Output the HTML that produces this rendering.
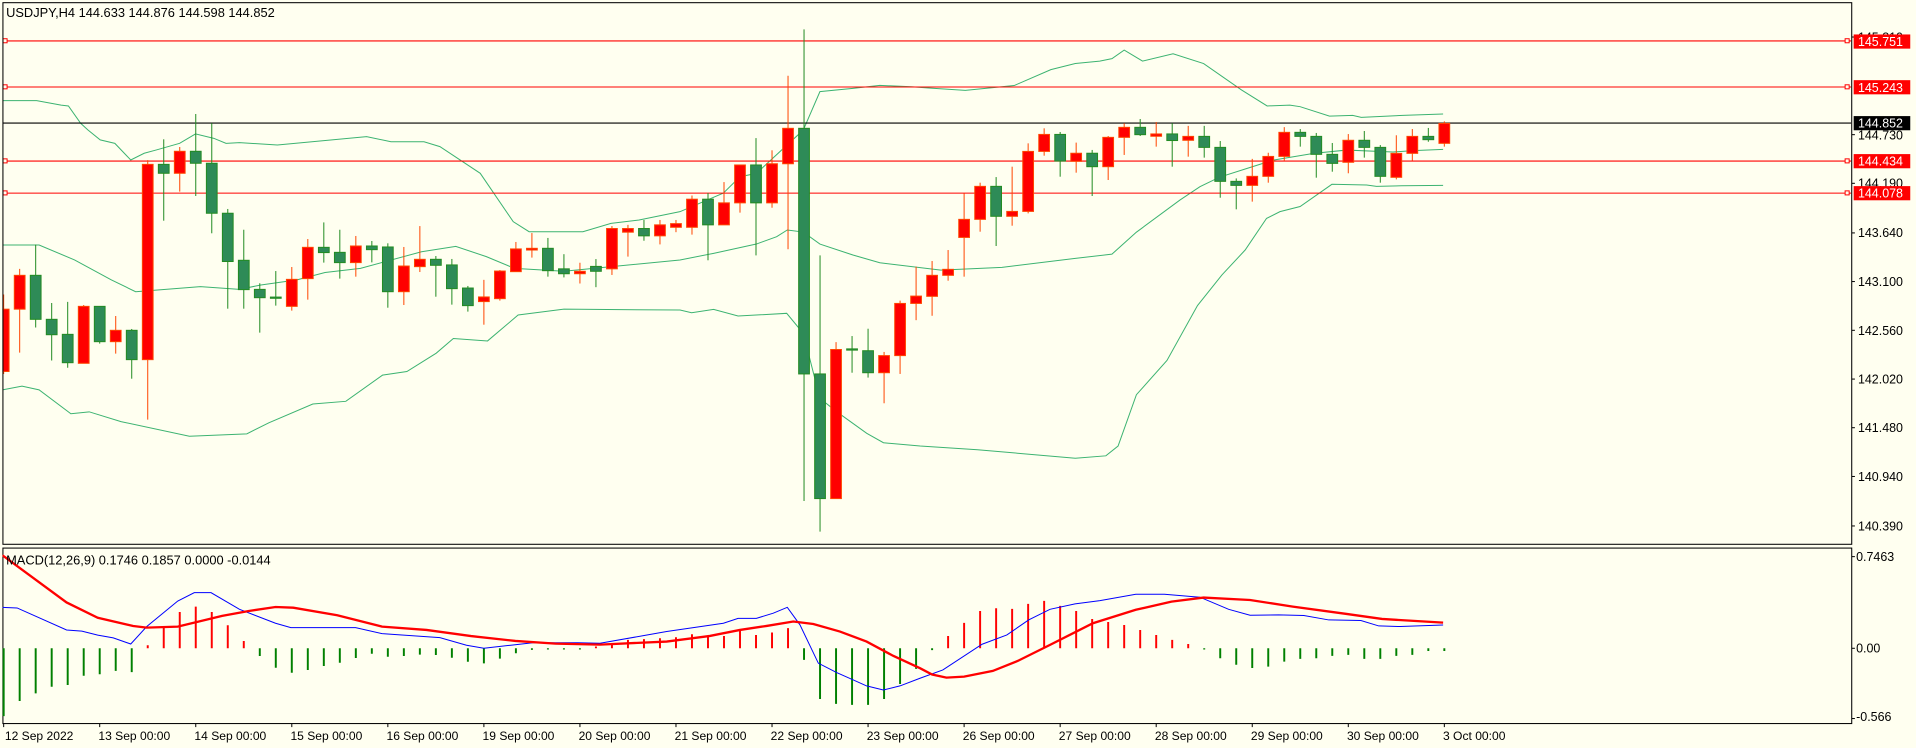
<!DOCTYPE html>
<html><head><meta charset="utf-8"><style>
html,body{margin:0;padding:0;background:#FFFFF0;}
svg{display:block;}
text{font-family:"Liberation Sans","DejaVu Sans",sans-serif;font-size:10.2px;fill:#000;}
.big{font-size:10.5px}
.tm{font-size:9.9px}
.g line{stroke:#228B22;stroke-width:0.82}
.g rect{fill:#2E8B57;stroke:#228B22;stroke-width:0.82}
.r line{stroke:#FF4500;stroke-width:0.82}
.r rect{fill:#FF0000;stroke:#FF4500;stroke-width:0.82}
.bb{fill:none;stroke:#3CB371;stroke-width:0.82}
.hr{stroke:#FF0000;stroke-width:0.82}
.hg line{stroke:#008000;stroke-width:1.6}
.hrd line{stroke:#FF0000;stroke-width:1.6}
.wt{fill:#fff}
</style></head><body>
<svg width="1916" height="748" viewBox="0 0 1568 612.1" preserveAspectRatio="none" xmlns="http://www.w3.org/2000/svg">
<rect x="0" y="0" width="1568" height="612.1" fill="#FFFFF0"/>
<defs><clipPath id="cm"><rect x="2" y="2" width="1513" height="443"/></clipPath>
<clipPath id="cd"><rect x="2" y="448.5" width="1513" height="143.5"/></clipPath></defs>

<g clip-path="url(#cm)">
<polyline class="bb" points="2,82.3 30,82.3 50,86 56,86.7 66,100.9 72,106.4 82,114.5 94,117.3 107,130.9 118,125.4 128,122.7 147,117.3 160,109.6 175,113.2 185,117.3 196,116.7 227,118.7 300,111.8 320,116 347,116 360,120 393,141.8 420,181.4 433,189.6 477,189.6 500,182.8 523,180 556.5,173.2 592,158 605.6,144.6 619,141.9 657.4,106.4 671,75 698,72.3 720,69.9 746,71 760,72 790,74 830,70 860,57 880,52 900,50 910,48 920,41 935,50 960,44 985,52 1016,73.6 1037,86.7 1055.6,86 1064,87.3 1088,95 1107,94.4 1114,96 1148,94.4 1181,93.3"/>
<polyline class="bb" points="2,200.5 32,200.5 61,212.7 91,229 111,238.7 129,237.3 164,234.6 196,236.8 213.5,233.2 243,229 266,223 295,219.6 345,206 373,201.6 398,210 421,219.6 461.5,222 556.5,212.8 584,207.3 619,199.7 635.6,193.7 644.3,188.2 657.4,189.9 671,199.7 698,208.7 720,215 770,221 820,218.8 880,211.4 910,208 930,190 965.6,163.7 982,152.8 998,145 1020,138 1042,131 1075,125.5 1102,122.8 1140,124.4 1156.6,123.3 1181,122.2"/>
<polyline class="bb" points="2,319 18,316 32,319 58,338.6 73,337 99,345 155,357 202,355 220,346 256,330.6 283,328.4 313,307 333,304 357,289 371,277 399,279 424,257.8 461.5,253 556.5,253.7 566,255.9 584,253.2 604,258.6 643.8,256.4 657.4,272.8 671,326 684.7,336.9 709.3,354.6 723,362.3 753,365 800,368 880,375 905,373 915,365 930,323 955,295 980,250 1000,225 1019,204.6 1036.5,178.7 1047.5,173.2 1064,169 1090,150.8 1118.4,151.4 1126.5,152.5 1147,152 1181,151.7"/>

<line class="hr" x1="2" y1="33.5" x2="1515" y2="33.5"/>
<line class="hr" x1="2" y1="71.2" x2="1515" y2="71.2"/>
<line class="hr" x1="2" y1="131.8" x2="1515" y2="131.8"/>
<line class="hr" x1="2" y1="158" x2="1515" y2="158"/>
<line x1="2" y1="100.7" x2="1515" y2="100.7" stroke="#000" stroke-width="0.9"/>
<g fill="#FFFFF0" stroke="#FF0000" stroke-width="0.82">
<rect x="2.5" y="31.7" width="3.3" height="3.3"/><rect x="2.5" y="69.4" width="3.3" height="3.3"/><rect x="2.5" y="130" width="3.3" height="3.3"/><rect x="2.5" y="156.2" width="3.3" height="3.3"/>
<rect x="1510" y="31.7" width="3.3" height="3.3"/><rect x="1510" y="69.4" width="3.3" height="3.3"/><rect x="1510" y="130" width="3.3" height="3.3"/><rect x="1510" y="156.2" width="3.3" height="3.3"/>
</g>

<g class="r"><line x1="3" y1="241" x2="3" y2="306"/><rect x="-1.4" y="253" width="8.8" height="51"/></g>
<g class="r"><line x1="16.1" y1="220" x2="16.1" y2="288.6"/><rect x="11.7" y="225.3" width="8.8" height="27.7"/></g>
<g class="g"><line x1="29.2" y1="200.2" x2="29.2" y2="268"/><rect x="24.8" y="225.3" width="8.8" height="36"/></g>
<g class="g"><line x1="42.3" y1="248" x2="42.3" y2="295"/><rect x="37.9" y="261.3" width="8.8" height="12.6"/></g>
<g class="g"><line x1="55.4" y1="247" x2="55.4" y2="300.9"/><rect x="51" y="273.6" width="8.8" height="23.2"/></g>
<g class="r"><line x1="68.5" y1="249.6" x2="68.5" y2="297.3"/><rect x="64.1" y="250.7" width="8.8" height="46.6"/></g>
<g class="g"><line x1="81.6" y1="250.7" x2="81.6" y2="281.2"/><rect x="77.2" y="250.7" width="8.8" height="28.9"/></g>
<g class="r"><line x1="94.7" y1="258.6" x2="94.7" y2="289.4"/><rect x="90.3" y="270.3" width="8.8" height="9.3"/></g>
<g class="g"><line x1="107.8" y1="269.2" x2="107.8" y2="309.9"/><rect x="103.4" y="270.3" width="8.8" height="24"/></g>
<g class="r"><line x1="120.9" y1="131" x2="120.9" y2="343.4"/><rect x="116.5" y="134.5" width="8.8" height="159.8"/></g>
<g class="g"><line x1="134" y1="114" x2="134" y2="180.6"/><rect x="129.6" y="134.5" width="8.8" height="7.3"/></g>
<g class="r"><line x1="147.1" y1="120.3" x2="147.1" y2="156.8"/><rect x="142.7" y="123.8" width="8.8" height="18"/></g>
<g class="g"><line x1="160.2" y1="93.3" x2="160.2" y2="160.4"/><rect x="155.8" y="123.8" width="8.8" height="9.8"/></g>
<g class="g"><line x1="173.3" y1="100.9" x2="173.3" y2="190.9"/><rect x="168.9" y="133.6" width="8.8" height="40.9"/></g>
<g class="g"><line x1="186.4" y1="171" x2="186.4" y2="252.6"/><rect x="182" y="174.5" width="8.8" height="39.5"/></g>
<g class="g"><line x1="199.5" y1="188" x2="199.5" y2="252.6"/><rect x="195.1" y="213" width="8.8" height="24"/></g>
<g class="g"><line x1="212.6" y1="231.8" x2="212.6" y2="272.2"/><rect x="208.2" y="236.8" width="8.8" height="6.8"/></g>
<g class="g"><line x1="225.7" y1="221.8" x2="225.7" y2="250.1"/><rect x="221.3" y="243.1" width="8.8" height="1"/></g>
<g class="r"><line x1="238.8" y1="218.5" x2="238.8" y2="254.2"/><rect x="234.4" y="228.6" width="8.8" height="22.1"/></g>
<g class="r"><line x1="251.9" y1="195.6" x2="251.9" y2="245.2"/><rect x="247.5" y="202.4" width="8.8" height="25.6"/></g>
<g class="g"><line x1="265" y1="182" x2="265" y2="214.9"/><rect x="260.6" y="202.4" width="8.8" height="4.3"/></g>
<g class="g"><line x1="278.1" y1="188" x2="278.1" y2="228"/><rect x="273.7" y="206.5" width="8.8" height="8.4"/></g>
<g class="r"><line x1="291.2" y1="193.1" x2="291.2" y2="226.4"/><rect x="286.8" y="201.3" width="8.8" height="13.6"/></g>
<g class="g"><line x1="304.3" y1="197.2" x2="304.3" y2="214.7"/><rect x="299.9" y="201.3" width="8.8" height="3"/></g>
<g class="g"><line x1="317.4" y1="199.1" x2="317.4" y2="251.8"/><rect x="313" y="202.1" width="8.8" height="36.6"/></g>
<g class="r"><line x1="330.5" y1="202.1" x2="330.5" y2="249.6"/><rect x="326.1" y="217.7" width="8.8" height="21"/></g>
<g class="r"><line x1="343.6" y1="185" x2="343.6" y2="222.6"/><rect x="339.2" y="212.2" width="8.8" height="6"/></g>
<g class="g"><line x1="356.7" y1="209.5" x2="356.7" y2="242.8"/><rect x="352.3" y="212.2" width="8.8" height="4.9"/></g>
<g class="g"><line x1="369.8" y1="211.9" x2="369.8" y2="249.3"/><rect x="365.4" y="216.8" width="8.8" height="19.4"/></g>
<g class="g"><line x1="382.9" y1="234" x2="382.9" y2="255"/><rect x="378.5" y="235.7" width="8.8" height="14.4"/></g>
<g class="r"><line x1="396" y1="229" x2="396" y2="265.7"/><rect x="391.6" y="243" width="8.8" height="3.8"/></g>
<g class="r"><line x1="409.1" y1="221" x2="409.1" y2="246"/><rect x="404.7" y="221.8" width="8.8" height="22.6"/></g>
<g class="r"><line x1="422.2" y1="198" x2="422.2" y2="222.3"/><rect x="417.8" y="203.7" width="8.8" height="18.6"/></g>
<g class="r"><line x1="435.3" y1="190.7" x2="435.3" y2="210.8"/><rect x="430.9" y="203.2" width="8.8" height="1.4"/></g>
<g class="g"><line x1="448.4" y1="194.7" x2="448.4" y2="226.4"/><rect x="444" y="203.2" width="8.8" height="18.3"/></g>
<g class="g"><line x1="461.5" y1="208" x2="461.5" y2="227"/><rect x="457.1" y="220" width="8.8" height="4"/></g>
<g class="r"><line x1="474.6" y1="215" x2="474.6" y2="232"/><rect x="470.2" y="222" width="8.8" height="2"/></g>
<g class="g"><line x1="487.7" y1="212" x2="487.7" y2="235"/><rect x="483.3" y="218" width="8.8" height="4"/></g>
<g class="r"><line x1="500.8" y1="185" x2="500.8" y2="225"/><rect x="496.4" y="187" width="8.8" height="33"/></g>
<g class="r"><line x1="513.9" y1="184" x2="513.9" y2="210"/><rect x="509.5" y="187" width="8.8" height="3"/></g>
<g class="g"><line x1="527" y1="180" x2="527" y2="197"/><rect x="522.6" y="187" width="8.8" height="6"/></g>
<g class="r"><line x1="540.1" y1="180" x2="540.1" y2="200"/><rect x="535.7" y="184" width="8.8" height="9"/></g>
<g class="r"><line x1="553.2" y1="180" x2="553.2" y2="190"/><rect x="548.8" y="183" width="8.8" height="3"/></g>
<g class="r"><line x1="566.3" y1="160" x2="566.3" y2="192"/><rect x="561.9" y="163" width="8.8" height="23"/></g>
<g class="g"><line x1="579.4" y1="158" x2="579.4" y2="213"/><rect x="575" y="163" width="8.8" height="21"/></g>
<g class="r"><line x1="592.5" y1="149" x2="592.5" y2="184"/><rect x="588.1" y="166" width="8.8" height="18"/></g>
<g class="r"><line x1="605.6" y1="135" x2="605.6" y2="174"/><rect x="601.2" y="135" width="8.8" height="31"/></g>
<g class="g"><line x1="618.7" y1="113" x2="618.7" y2="209"/><rect x="614.3" y="135" width="8.8" height="31"/></g>
<g class="r"><line x1="631.8" y1="123" x2="631.8" y2="170"/><rect x="627.4" y="134" width="8.8" height="32"/></g>
<g class="r"><line x1="644.9" y1="62" x2="644.9" y2="204"/><rect x="640.5" y="105" width="8.8" height="29"/></g>
<g class="g"><line x1="658" y1="24" x2="658" y2="410"/><rect x="653.6" y="105" width="8.8" height="201"/></g>
<g class="g"><line x1="671.1" y1="209" x2="671.1" y2="435"/><rect x="666.7" y="306" width="8.8" height="102"/></g>
<g class="r"><line x1="684.2" y1="280" x2="684.2" y2="408"/><rect x="679.8" y="286" width="8.8" height="122"/></g>
<g class="g"><line x1="697.3" y1="275" x2="697.3" y2="305"/><rect x="692.9" y="285.5" width="8.8" height="1"/></g>
<g class="g"><line x1="710.4" y1="269" x2="710.4" y2="309"/><rect x="706" y="287" width="8.8" height="18"/></g>
<g class="r"><line x1="723.5" y1="288" x2="723.5" y2="330"/><rect x="719.1" y="291" width="8.8" height="14"/></g>
<g class="r"><line x1="736.6" y1="246" x2="736.6" y2="306"/><rect x="732.2" y="248.3" width="8.8" height="42.7"/></g>
<g class="r"><line x1="749.7" y1="218.2" x2="749.7" y2="262"/><rect x="745.3" y="242.3" width="8.8" height="6"/></g>
<g class="r"><line x1="762.8" y1="213.6" x2="762.8" y2="258.4"/><rect x="758.4" y="225.3" width="8.8" height="17.2"/></g>
<g class="r"><line x1="775.9" y1="204.6" x2="775.9" y2="229.7"/><rect x="771.5" y="220.4" width="8.8" height="4.9"/></g>
<g class="r"><line x1="789" y1="158.2" x2="789" y2="226.4"/><rect x="784.6" y="179.5" width="8.8" height="14.8"/></g>
<g class="r"><line x1="802.1" y1="149.5" x2="802.1" y2="189.6"/><rect x="797.7" y="152.5" width="8.8" height="27"/></g>
<g class="g"><line x1="815.2" y1="144.9" x2="815.2" y2="201.3"/><rect x="810.8" y="152.5" width="8.8" height="24.5"/></g>
<g class="r"><line x1="828.3" y1="136.4" x2="828.3" y2="184.7"/><rect x="823.9" y="173" width="8.8" height="4"/></g>
<g class="r"><line x1="841.4" y1="117.3" x2="841.4" y2="174.6"/><rect x="837" y="123.9" width="8.8" height="49.1"/></g>
<g class="r"><line x1="854.5" y1="105" x2="854.5" y2="127.4"/><rect x="850.1" y="110" width="8.8" height="13.9"/></g>
<g class="g"><line x1="867.6" y1="108" x2="867.6" y2="144.6"/><rect x="863.2" y="110" width="8.8" height="21.8"/></g>
<g class="r"><line x1="880.7" y1="116.7" x2="880.7" y2="141.3"/><rect x="876.3" y="125.4" width="8.8" height="6.6"/></g>
<g class="g"><line x1="893.8" y1="122.7" x2="893.8" y2="160.4"/><rect x="889.4" y="125.4" width="8.8" height="11"/></g>
<g class="r"><line x1="906.9" y1="111.3" x2="906.9" y2="147.3"/><rect x="902.5" y="112.4" width="8.8" height="24"/></g>
<g class="r"><line x1="920" y1="100.9" x2="920" y2="126.8"/><rect x="915.6" y="104.2" width="8.8" height="8.2"/></g>
<g class="g"><line x1="933.1" y1="97.4" x2="933.1" y2="111.3"/><rect x="928.7" y="104.2" width="8.8" height="6"/></g>
<g class="r"><line x1="946.2" y1="99.8" x2="946.2" y2="120"/><rect x="941.8" y="109.6" width="8.8" height="1.9"/></g>
<g class="g"><line x1="959.3" y1="100.9" x2="959.3" y2="136.4"/><rect x="954.9" y="109.6" width="8.8" height="5.4"/></g>
<g class="r"><line x1="972.4" y1="103" x2="972.4" y2="128.2"/><rect x="968" y="111.6" width="8.8" height="3.2"/></g>
<g class="g"><line x1="985.5" y1="103" x2="985.5" y2="129"/><rect x="981.1" y="111.6" width="8.8" height="9"/></g>
<g class="g"><line x1="998.6" y1="115.4" x2="998.6" y2="161.8"/><rect x="994.2" y="120.6" width="8.8" height="27.8"/></g>
<g class="g"><line x1="1011.7" y1="146" x2="1011.7" y2="171.3"/><rect x="1007.3" y="148.4" width="8.8" height="3.3"/></g>
<g class="r"><line x1="1024.8" y1="130" x2="1024.8" y2="165"/><rect x="1020.4" y="144.3" width="8.8" height="7.4"/></g>
<g class="r"><line x1="1037.9" y1="125" x2="1037.9" y2="149.5"/><rect x="1033.5" y="128" width="8.8" height="16.3"/></g>
<g class="r"><line x1="1051" y1="104" x2="1051" y2="131.7"/><rect x="1046.6" y="108.3" width="8.8" height="19.7"/></g>
<g class="g"><line x1="1064.1" y1="105.6" x2="1064.1" y2="120"/><rect x="1059.7" y="108.3" width="8.8" height="3.3"/></g>
<g class="g"><line x1="1077.2" y1="108.8" x2="1077.2" y2="145.4"/><rect x="1072.8" y="111.6" width="8.8" height="14.7"/></g>
<g class="g"><line x1="1090.3" y1="117" x2="1090.3" y2="140.5"/><rect x="1085.9" y="126.3" width="8.8" height="7.4"/></g>
<g class="r"><line x1="1103.4" y1="109.7" x2="1103.4" y2="141.8"/><rect x="1099" y="114.8" width="8.8" height="18"/></g>
<g class="g"><line x1="1116.5" y1="107.2" x2="1116.5" y2="129"/><rect x="1112.1" y="114.8" width="8.8" height="5.8"/></g>
<g class="g"><line x1="1129.6" y1="118.7" x2="1129.6" y2="149.5"/><rect x="1125.2" y="120.6" width="8.8" height="23.7"/></g>
<g class="r"><line x1="1142.7" y1="110.7" x2="1142.7" y2="146.8"/><rect x="1138.3" y="125.5" width="8.8" height="19.6"/></g>
<g class="r"><line x1="1155.8" y1="105.6" x2="1155.8" y2="131.5"/><rect x="1151.4" y="111.6" width="8.8" height="13.9"/></g>
<g class="g"><line x1="1168.9" y1="104.7" x2="1168.9" y2="116"/><rect x="1164.5" y="111.6" width="8.8" height="2.7"/></g>
<g class="r"><line x1="1182" y1="99.3" x2="1182" y2="120"/><rect x="1177.6" y="101" width="8.8" height="16.3"/></g>
</g>

<rect x="2.4" y="2.2" width="1513" height="443.2" fill="none" stroke="#000" stroke-width="0.85"/>
<rect x="2.4" y="448.5" width="1513" height="143.6" fill="none" stroke="#000" stroke-width="0.85"/>

<text class="big" x="5" y="13.8">USDJPY,H4  144.633 144.876 144.598 144.852</text>

<g stroke="#000" stroke-width="0.82">
<line x1="1515.5" y1="30.3" x2="1518" y2="30.3"/><line x1="1515.5" y1="110.2" x2="1518" y2="110.2"/><line x1="1515.5" y1="150" x2="1518" y2="150"/><line x1="1515.5" y1="190.6" x2="1518" y2="190.6"/><line x1="1515.5" y1="230.4" x2="1518" y2="230.4"/><line x1="1515.5" y1="270.3" x2="1518" y2="270.3"/><line x1="1515.5" y1="310.2" x2="1518" y2="310.2"/><line x1="1515.5" y1="350" x2="1518" y2="350"/><line x1="1515.5" y1="389.9" x2="1518" y2="389.9"/><line x1="1515.5" y1="430.4" x2="1518" y2="430.4"/>
<line x1="1515.5" y1="455.5" x2="1518" y2="455.5"/><line x1="1515.5" y1="530.5" x2="1518" y2="530.5"/><line x1="1515.5" y1="588" x2="1518" y2="588"/>
</g>
<text x="1520.5" y="34">145.810</text>
<text x="1520.5" y="114">144.730</text>
<text x="1520.5" y="153.5">144.190</text>
<text x="1520.5" y="194">143.640</text>
<text x="1520.5" y="234">143.100</text>
<text x="1520.5" y="274">142.560</text>
<text x="1520.5" y="314">142.020</text>
<text x="1520.5" y="353.5">141.480</text>
<text x="1520.5" y="393.5">140.940</text>
<text x="1520.5" y="434">140.390</text>

<rect x="1517" y="28.2" width="46.3" height="11.6" fill="#FF0000"/><text class="wt" x="1520.5" y="37.7">145.751</text>
<rect x="1517" y="65.6" width="46.3" height="11.6" fill="#FF0000"/><text class="wt" x="1520.5" y="75.1">145.243</text>
<rect x="1517" y="95" width="46.3" height="11.6" fill="#000"/><text class="wt" x="1520.5" y="104.5">144.852</text>
<rect x="1517" y="126.1" width="46.3" height="11.6" fill="#FF0000"/><text class="wt" x="1520.5" y="135.6">144.434</text>
<rect x="1517" y="152.3" width="46.3" height="11.6" fill="#FF0000"/><text class="wt" x="1520.5" y="161.8">144.078</text>

<g clip-path="url(#cd)">
<g class="hg">
<line x1="3" y1="530.5" x2="3" y2="586"/><line x1="16.1" y1="530.5" x2="16.1" y2="573.6"/><line x1="29.2" y1="530.5" x2="29.2" y2="567.4"/><line x1="42.3" y1="530.5" x2="42.3" y2="562"/><line x1="55.4" y1="530.5" x2="55.4" y2="560.5"/><line x1="68.5" y1="530.5" x2="68.5" y2="553"/><line x1="81.6" y1="530.5" x2="81.6" y2="551.8"/><line x1="94.7" y1="530.5" x2="94.7" y2="549"/><line x1="107.8" y1="530.5" x2="107.8" y2="550"/>
<line x1="212.6" y1="530.5" x2="212.6" y2="536.8"/><line x1="225.7" y1="530.5" x2="225.7" y2="546.4"/><line x1="238.8" y1="530.5" x2="238.8" y2="550.5"/><line x1="251.9" y1="530.5" x2="251.9" y2="548.3"/><line x1="265" y1="530.5" x2="265" y2="545"/><line x1="278.1" y1="530.5" x2="278.1" y2="542.3"/><line x1="291.2" y1="530.5" x2="291.2" y2="538.5"/><line x1="304.3" y1="530.5" x2="304.3" y2="535"/><line x1="317.4" y1="530.5" x2="317.4" y2="537.4"/><line x1="330.5" y1="530.5" x2="330.5" y2="536.8"/><line x1="343.6" y1="530.5" x2="343.6" y2="535.7"/><line x1="356.7" y1="530.5" x2="356.7" y2="536"/><line x1="369.8" y1="530.5" x2="369.8" y2="538.2"/><line x1="382.9" y1="530.5" x2="382.9" y2="541.5"/><line x1="396" y1="530.5" x2="396" y2="542.8"/><line x1="409.1" y1="530.5" x2="409.1" y2="539"/><line x1="422.2" y1="530.5" x2="422.2" y2="534.6"/><line x1="435.3" y1="530.5" x2="435.3" y2="531.8"/><line x1="448.4" y1="530.5" x2="448.4" y2="531.5"/><line x1="461.5" y1="530.5" x2="461.5" y2="531.5"/><line x1="474.6" y1="530.5" x2="474.6" y2="531.5"/>
<line x1="658" y1="530.5" x2="658" y2="540"/><line x1="671.1" y1="530.5" x2="671.1" y2="572"/><line x1="684.2" y1="530.5" x2="684.2" y2="576"/><line x1="697.3" y1="530.5" x2="697.3" y2="576.8"/><line x1="710.4" y1="530.5" x2="710.4" y2="576.8"/><line x1="723.5" y1="530.5" x2="723.5" y2="572"/><line x1="736.6" y1="530.5" x2="736.6" y2="559.7"/><line x1="749.7" y1="530.5" x2="749.7" y2="547.4"/><line x1="762.8" y1="530.5" x2="762.8" y2="532"/>
<line x1="985.5" y1="530.5" x2="985.5" y2="531.5"/><line x1="998.6" y1="530.5" x2="998.6" y2="538.7"/><line x1="1011.7" y1="530.5" x2="1011.7" y2="544"/><line x1="1024.8" y1="530.5" x2="1024.8" y2="546.6"/><line x1="1037.9" y1="530.5" x2="1037.9" y2="545.5"/><line x1="1051" y1="530.5" x2="1051" y2="541.4"/><line x1="1064.1" y1="530.5" x2="1064.1" y2="539.2"/><line x1="1077.2" y1="530.5" x2="1077.2" y2="538.7"/><line x1="1090.3" y1="530.5" x2="1090.3" y2="536.7"/><line x1="1103.4" y1="530.5" x2="1103.4" y2="535.9"/><line x1="1116.5" y1="530.5" x2="1116.5" y2="539.2"/><line x1="1129.6" y1="530.5" x2="1129.6" y2="539.2"/><line x1="1142.7" y1="530.5" x2="1142.7" y2="536.7"/><line x1="1155.8" y1="530.5" x2="1155.8" y2="535.9"/><line x1="1168.9" y1="530.5" x2="1168.9" y2="532.7"/><line x1="1182" y1="530.5" x2="1182" y2="532.7"/>
</g>
<g class="hrd">
<line x1="120.9" y1="530.5" x2="120.9" y2="528"/><line x1="134" y1="530.5" x2="134" y2="512.8"/><line x1="147.1" y1="530.5" x2="147.1" y2="500.8"/><line x1="160.2" y1="530.5" x2="160.2" y2="496.4"/><line x1="173.3" y1="530.5" x2="173.3" y2="500.8"/><line x1="186.4" y1="530.5" x2="186.4" y2="511.7"/><line x1="199.5" y1="530.5" x2="199.5" y2="524.5"/>
<line x1="487.7" y1="530.5" x2="487.7" y2="529"/><line x1="500.8" y1="530.5" x2="500.8" y2="526.4"/><line x1="513.9" y1="530.5" x2="513.9" y2="523.6"/><line x1="527" y1="530.5" x2="527" y2="523"/><line x1="540.1" y1="530.5" x2="540.1" y2="522.3"/><line x1="553.2" y1="530.5" x2="553.2" y2="521.5"/><line x1="566.3" y1="530.5" x2="566.3" y2="519"/><line x1="579.4" y1="530.5" x2="579.4" y2="520.4"/><line x1="592.5" y1="530.5" x2="592.5" y2="520.4"/><line x1="605.6" y1="530.5" x2="605.6" y2="516"/><line x1="618.7" y1="530.5" x2="618.7" y2="519.6"/><line x1="631.8" y1="530.5" x2="631.8" y2="517.6"/><line x1="644.9" y1="530.5" x2="644.9" y2="514"/>
<line x1="775.9" y1="530.5" x2="775.9" y2="520.4"/><line x1="789" y1="530.5" x2="789" y2="509.7"/><line x1="802.1" y1="530.5" x2="802.1" y2="500"/><line x1="815.2" y1="530.5" x2="815.2" y2="497.7"/><line x1="828.3" y1="530.5" x2="828.3" y2="498.3"/><line x1="841.4" y1="530.5" x2="841.4" y2="494.2"/><line x1="854.5" y1="530.5" x2="854.5" y2="491.7"/><line x1="867.6" y1="530.5" x2="867.6" y2="495.8"/><line x1="880.7" y1="530.5" x2="880.7" y2="500"/><line x1="893.8" y1="530.5" x2="893.8" y2="506.5"/><line x1="906.9" y1="530.5" x2="906.9" y2="509"/><line x1="920" y1="530.5" x2="920" y2="511.4"/><line x1="933.1" y1="530.5" x2="933.1" y2="515.5"/><line x1="946.2" y1="530.5" x2="946.2" y2="519.6"/><line x1="959.3" y1="530.5" x2="959.3" y2="523.6"/><line x1="972.4" y1="530.5" x2="972.4" y2="527"/>
</g>
<polyline fill="none" stroke="#0000FF" stroke-width="0.82" points="2,497 14,497.5 54.5,515.5 67,516.5 80,519.7 92.7,522 107,527 120,512.8 145.5,491.8 159,485 172.7,485 196,498.6 225.5,510 238,513.6 276,513.6 291,513.6 312.7,518.5 360,521.8 381.8,528 396,530.5 418,528 436,526 472.7,526 491,526.4 545.6,516.8 592,510 604,506 619,506 632.8,501.8 644.3,497 654.7,511.4 669.7,542.7 684.7,550.4 698.3,556.4 709.2,561.3 722.9,564.6 736.5,561.3 752.9,555 771.6,548.2 803.7,527.2 824,519.6 841.8,507.3 859.3,498.6 879.8,494.2 900.2,491.5 929.5,486.3 952.9,486.3 982,488.7 1005.5,498.6 1023,503.5 1046.4,503.2 1067,503.7 1087.4,507.3 1113.7,507.8 1128.3,512.2 1145.9,512.7 1181,511.4"/>
<polyline fill="none" stroke="#FF0000" stroke-width="1.9" points="2,454.4 54.5,493 80,505.5 109,512.3 120,513.6 145.5,512.8 181.8,504 203.6,500 225.5,496.7 240,497.3 276,503.5 312.7,512.8 349,515.5 385.5,520.5 421.8,524.5 454.5,526.7 491,527.5 545.6,525 581,520.4 605.6,515.5 627.4,512.2 649.2,508.6 665.6,510.6 687.4,516.8 709.2,525 731,536.7 752.9,546.8 762.8,552 774.5,554.5 789,553.7 812.5,549 833,540.8 859.3,527.7 894.4,510 929.5,499 958.7,492.3 985,489 1023,491 1058,496.4 1102,502.4 1131,506.5 1181,509.5"/>
</g>
<text class="big" x="5" y="461.8">MACD(12,26,9) 0.1746 0.1857 0.0000 -0.0144</text>
<text x="1519" y="459">0.7463</text>
<text x="1519" y="534">0.00</text>
<text x="1519" y="590">-0.566</text>

<g stroke="#000" stroke-width="0.82">
<line x1="3" y1="592" x2="3" y2="595"/><line x1="81.6" y1="592" x2="81.6" y2="595"/><line x1="160.2" y1="592" x2="160.2" y2="595"/><line x1="238.8" y1="592" x2="238.8" y2="595"/><line x1="317.4" y1="592" x2="317.4" y2="595"/><line x1="396" y1="592" x2="396" y2="595"/><line x1="474.6" y1="592" x2="474.6" y2="595"/><line x1="553.2" y1="592" x2="553.2" y2="595"/><line x1="631.8" y1="592" x2="631.8" y2="595"/><line x1="710.4" y1="592" x2="710.4" y2="595"/><line x1="789" y1="592" x2="789" y2="595"/><line x1="867.6" y1="592" x2="867.6" y2="595"/><line x1="946.2" y1="592" x2="946.2" y2="595"/><line x1="1024.8" y1="592" x2="1024.8" y2="595"/><line x1="1103.4" y1="592" x2="1103.4" y2="595"/><line x1="1182" y1="592" x2="1182" y2="595"/>
</g>
<g class="tm">
<text class="tm" x="4" y="605.5">12 Sep 2022</text>
<text class="tm" x="80.5" y="605.5">13 Sep 00:00</text>
<text class="tm" x="159.1" y="605.5">14 Sep 00:00</text>
<text class="tm" x="237.7" y="605.5">15 Sep 00:00</text>
<text class="tm" x="316.3" y="605.5">16 Sep 00:00</text>
<text class="tm" x="394.9" y="605.5">19 Sep 00:00</text>
<text class="tm" x="473.5" y="605.5">20 Sep 00:00</text>
<text class="tm" x="552.1" y="605.5">21 Sep 00:00</text>
<text class="tm" x="630.7" y="605.5">22 Sep 00:00</text>
<text class="tm" x="709.3" y="605.5">23 Sep 00:00</text>
<text class="tm" x="787.9" y="605.5">26 Sep 00:00</text>
<text class="tm" x="866.5" y="605.5">27 Sep 00:00</text>
<text class="tm" x="945.1" y="605.5">28 Sep 00:00</text>
<text class="tm" x="1023.7" y="605.5">29 Sep 00:00</text>
<text class="tm" x="1102.3" y="605.5">30 Sep 00:00</text>
<text class="tm" x="1180.9" y="605.5">3 Oct 00:00</text>
</g>
</svg>
</body></html>
